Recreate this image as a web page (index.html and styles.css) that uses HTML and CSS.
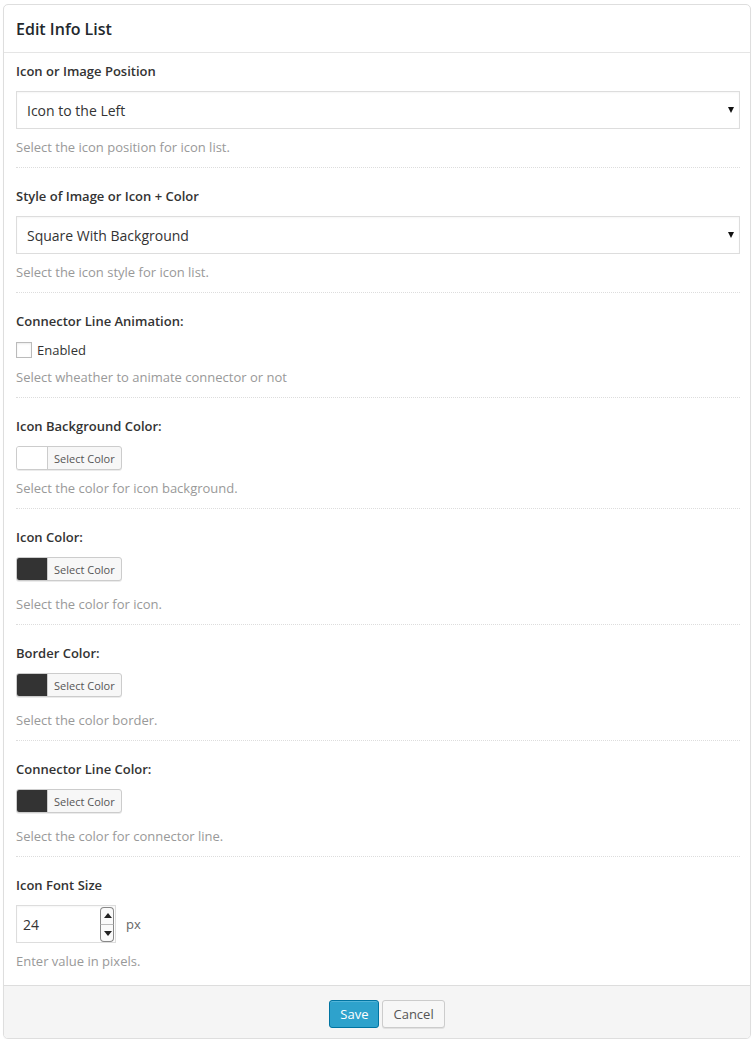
FILE: index.html
```html
<!DOCTYPE html>
<html lang="en">
<head>
  <meta charset="UTF-8" />
  <title>Edit Info List</title>
  <link rel="stylesheet" href="styles.css">
</head>
<body>

  <div class="panel">
    <div class="panel-header">
      <h1>Edit Info List</h1>
    </div>

    <div class="panel-body">
      <div class="field first">
        <label class="field-label">Icon or Image Position</label>
        <div class="select-wrap">
          <select>
            <option>Icon to the Left</option>
            <option>Icon to the Right</option>
          </select>
        </div>
        <p class="help">Select the icon position for icon list.</p>
      </div>

      <div class="field">
        <label class="field-label">Style of Image or Icon + Color</label>
        <div class="select-wrap">
          <select>
            <option>Square With Background</option>
            <option>Circle With Background</option>
          </select>
        </div>
        <p class="help">Select the icon style for icon list.</p>
      </div>

      <div class="field">
        <label class="field-label">Connector Line Animation:</label>
        <label class="check">
          <span class="box"></span>
          Enabled
        </label>
        <p class="help">Select wheather to animate connector or not</p>
      </div>

      <div class="field">
        <label class="field-label">Icon Background Color:</label>
        <button class="color-btn"><span class="swatch light"></span><span class="color-text">Select Color</span></button>
        <p class="help">Select the color for icon background.</p>
      </div>

      <div class="field">
        <label class="field-label">Icon Color:</label>
        <button class="color-btn"><span class="swatch dark"></span><span class="color-text">Select Color</span></button>
        <p class="help wide">Select the color for icon.</p>
      </div>

      <div class="field">
        <label class="field-label">Border Color:</label>
        <button class="color-btn"><span class="swatch dark"></span><span class="color-text">Select Color</span></button>
        <p class="help wide">Select the color border.</p>
      </div>

      <div class="field">
        <label class="field-label">Connector Line Color:</label>
        <button class="color-btn"><span class="swatch dark"></span><span class="color-text">Select Color</span></button>
        <p class="help wide">Select the color for connector line.</p>
      </div>

      <div class="field last">
        <label class="field-label">Icon Font Size</label>
        <div class="number-row">
          <div class="number-box">
            <span class="number-value">24</span>
            <div class="spinner">
              <span class="spin up"></span>
              <span class="spin down"></span>
            </div>
          </div>
          <span class="unit">px</span>
        </div>
        <p class="help">Enter value in pixels.</p>
      </div>
    </div>

    <div class="panel-footer">
      <button class="btn primary">Save</button>
      <button class="btn">Cancel</button>
    </div>
  </div>

</body>
</html>
```

FILE: styles.css
```css
body {
  font-family: "Open Sans", Arial, sans-serif;
  margin: 0;
  padding: 4px 5px 0 3px;
  background: #fff;
  color: #333;
}

.panel {
  border: 1px solid #dedede;
  border-radius: 5px;
  background: #fff;
  overflow: hidden;
  box-shadow: 0 1px 1px rgba(0, 0, 0, 0.04);
}

.panel-header {
  height: 47px;
  display: flex;
  align-items: center;
  padding: 0 12px;
  border-bottom: 1px solid #e5e5e5;
}

.panel-header h1 {
  margin: 0;
  font-size: 16px;
  font-weight: 600;
  color: #23282d;
}

.panel-body {
  padding: 0 10px 0 12px;
}

.field {
  padding: 19px 0 11px;
  border-bottom: 1px dotted #ddd;
}

.field.first {
  padding-top: 9px;
}

.field.last {
  border-bottom: none;
  padding-bottom: 15px;
}

.field-label {
  display: block;
  font-size: 13px;
  font-weight: 600;
  line-height: 18px;
  color: #333;
  margin-bottom: 11px;
}

.select-wrap {
  position: relative;
}

.select-wrap select {
  display: block;
  width: 100%;
  height: 38px;
  border: 1px solid #ddd;
  background: #fff;
  font-family: inherit;
  font-size: 14px;
  color: #333;
  padding: 0 10px;
  appearance: none;
  -webkit-appearance: none;
  border-radius: 0;
  box-shadow: inset 0 1px 2px rgba(0, 0, 0, 0.04);
}

.select-wrap::after {
  content: "";
  position: absolute;
  right: 6px;
  top: 16px;
  border-left: 3px solid transparent;
  border-right: 3px solid transparent;
  border-top: 6px solid #111;
}

.help {
  margin: 9px 0 0;
  font-size: 13px;
  line-height: 18px;
  color: #999;
}

.help.wide {
  margin-top: 14px;
}

.check {
  display: flex;
  align-items: center;
  gap: 5px;
  font-size: 13px;
  line-height: 18px;
  color: #333;
  margin-top: 11px;
}

.box {
  width: 14px;
  height: 14px;
  border: 1px solid #bbb;
  background: #fff;
  box-shadow: inset 0 1px 2px rgba(0, 0, 0, 0.08);
}

.color-btn {
  display: flex;
  align-items: stretch;
  height: 24px;
  padding: 0;
  border: 1px solid #ccc;
  border-radius: 3px;
  background: #f7f7f7;
  font-family: inherit;
  box-shadow: 0 1px 0 rgba(0, 0, 0, 0.08);
  overflow: hidden;
  cursor: pointer;
}

.swatch {
  width: 30px;
  border-right: 1px solid #ccc;
}

.swatch.light {
  background: #fff;
}

.swatch.dark {
  background: #333;
}

.color-text {
  display: flex;
  align-items: center;
  padding: 0 6px;
  font-size: 11px;
  color: #555;
}

.number-row {
  display: flex;
  align-items: center;
  gap: 10px;
}

.number-box {
  box-sizing: border-box;
  width: 100px;
  height: 38px;
  border: 1px solid #ddd;
  display: flex;
  align-items: center;
  justify-content: space-between;
  padding: 0 1px 0 6px;
  box-shadow: inset 0 1px 2px rgba(0, 0, 0, 0.04);
}

.number-value {
  font-size: 14px;
  color: #333;
}

.spinner {
  display: flex;
  flex-direction: column;
  width: 14px;
}

.spin {
  height: 16px;
  border: 1px solid #888;
  border-radius: 4px;
  background: #fafafa;
  position: relative;
}

.spin.up {
  border-bottom-color: #bbb;
  border-bottom-left-radius: 0;
  border-bottom-right-radius: 0;
}

.spin.down {
  border-top: none;
  border-top-left-radius: 0;
  border-top-right-radius: 0;
}

.spin::after {
  content: "";
  position: absolute;
  left: 3px;
  top: 5px;
  border-left: 4px solid transparent;
  border-right: 4px solid transparent;
}

.spin.up::after {
  border-bottom: 5px solid #222;
}

.spin.down::after {
  border-top: 5px solid #222;
  top: 6px;
}

.unit {
  font-size: 13px;
  color: #666;
}

.panel-footer {
  background: #f5f5f5;
  border-top: 1px solid #ddd;
  display: flex;
  justify-content: center;
  gap: 3px;
  padding: 14px 0 10px 20px;
}

.btn {
  height: 28px;
  padding: 0 10px;
  font-family: inherit;
  font-size: 13px;
  border-radius: 3px;
  border: 1px solid #ccc;
  background: #f7f7f7;
  color: #555;
  box-shadow: 0 1px 0 rgba(0, 0, 0, 0.08);
  cursor: pointer;
}

.btn.primary {
  background: #2ea2cc;
  border-color: #0074a2;
  color: #fff;
  box-shadow: inset 0 1px 0 rgba(120, 200, 230, 0.5);
}
```
